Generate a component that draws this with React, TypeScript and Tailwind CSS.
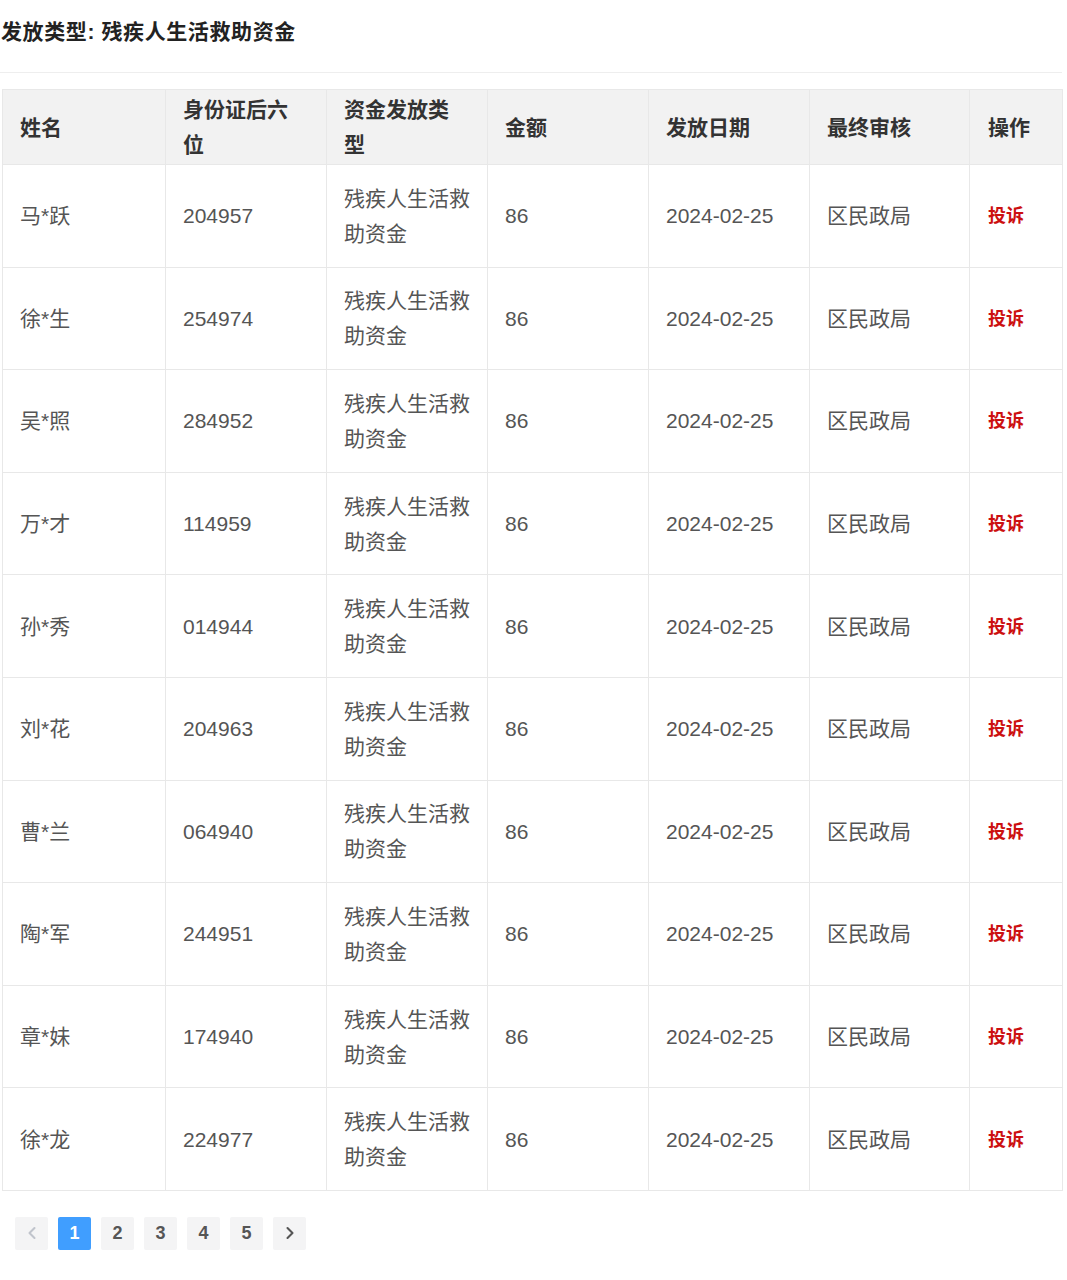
import { ChevronLeft, ChevronRight } from "lucide-react";

const rows = [
  ["马*跃", "204957"],
  ["徐*生", "254974"],
  ["吴*照", "284952"],
  ["万*才", "114959"],
  ["孙*秀", "014944"],
  ["刘*花", "204963"],
  ["曹*兰", "064940"],
  ["陶*军", "244951"],
  ["章*妹", "174940"],
  ["徐*龙", "224977"],
];

const font = { fontFamily: '"Liberation Sans", "Noto Sans CJK SC", sans-serif' };

export default function App() {
  return (
    <div className="bg-white min-h-screen w-[1067px] pl-[2px] pt-[18px]" style={font}>
      <h1 className="text-[21px] leading-[28px] font-bold text-[#222] mb-[26px] -ml-[1px] tracking-[0.6px]">
        发放类型: 残疾人生活救助资金
      </h1>
      <div className="border-t border-[#eeeeee] w-[1062px] -ml-[2px] mb-[16px]" />

      <table className="table-fixed border-collapse w-[1060px] text-[21px] leading-[35px]">
        <colgroup>
          <col className="w-[163px]" />
          <col className="w-[161px]" />
          <col className="w-[161px]" />
          <col className="w-[161px]" />
          <col className="w-[161px]" />
          <col className="w-[160px]" />
          <col className="w-[93px]" />
        </colgroup>
        <thead>
          <tr className="bg-[#f2f2f2] h-[75px] text-[#333] font-bold">
            {["姓名", "身份证后六位", "资金发放类型", "金额", "发放日期", "最终审核", "操作"].map((h, i) => (
              <th
                key={h}
                className={`border border-[#e8e8e8] text-left align-middle py-[2px] ${i === 6 ? "pl-[18px] pr-2" : "pl-[17px] pr-[26px]"}`}
              >
                {h}
              </th>
            ))}
          </tr>
        </thead>
        <tbody className="text-[#555]">
          {rows.map(([name, id]) => (
            <tr key={name + id} className="h-[102.6px]">
              <td className="border border-[#e8e8e8] pl-[17px] align-middle">{name}</td>
              <td className="border border-[#e8e8e8] pl-[17px] align-middle">{id}</td>
              <td className="border border-[#e8e8e8] pl-[17px] pr-[16px] align-middle">残疾人生活救助资金</td>
              <td className="border border-[#e8e8e8] pl-[17px] align-middle">86</td>
              <td className="border border-[#e8e8e8] pl-[17px] align-middle">2024-02-25</td>
              <td className="border border-[#e8e8e8] pl-[17px] align-middle">区民政局</td>
              <td className="border border-[#e8e8e8] pl-[18px] align-middle">
                <span className="text-[18px] font-bold text-[#cc1010]">投诉</span>
              </td>
            </tr>
          ))}
        </tbody>
      </table>

      <div className="flex gap-[10px] mt-[26px] ml-[13px]">
        <button className="w-[33px] h-[33px] rounded-[2px] bg-[#f4f4f5] text-[#c0c4cc] flex items-center justify-center">
          <ChevronLeft size={20} strokeWidth={2.5} />
        </button>
        {[1, 2, 3, 4, 5].map((n) => (
          <button
            key={n}
            className={`w-[33px] h-[33px] rounded-[2px] text-[18px] font-bold flex items-center justify-center ${
              n === 1 ? "bg-[#409eff] text-white" : "bg-[#f4f4f5] text-[#555]"
            }`}
          >
            {n}
          </button>
        ))}
        <button className="w-[33px] h-[33px] rounded-[2px] bg-[#f4f4f5] text-[#555] flex items-center justify-center">
          <ChevronRight size={20} strokeWidth={2.5} />
        </button>
      </div>
    </div>
  );
}
